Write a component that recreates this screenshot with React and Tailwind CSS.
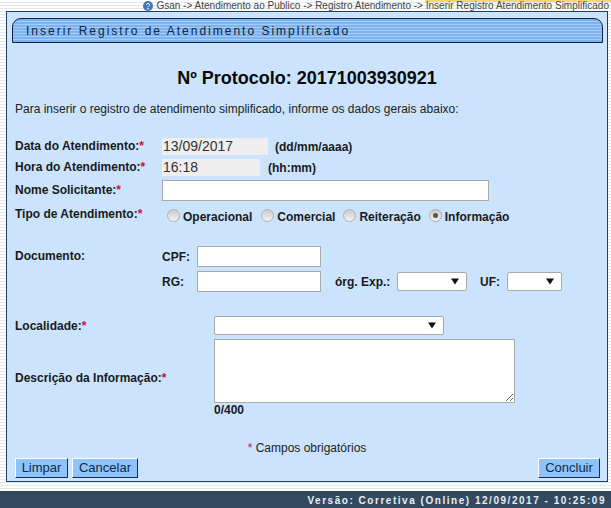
const font = { fontFamily: '"Liberation Sans", Arial, sans-serif' };

function Label({ children, req, className = "" }) {
  return (
    <span className={`font-bold text-[12px] leading-[14px] text-[#1a1a1a] ${className}`}>
      {children}
      {req && <span className="text-[#d01030]">*</span>}
    </span>
  );
}

function Input({ className = "" }) {
  return <input className={`block bg-white border border-[#a9a9a9] outline-none ${className}`} />;
}

function ReadOnly({ value, className = "" }) {
  return (
    <div className={`bg-[#eeeeee] text-[14px] leading-[17px] text-[#333] px-[1px] ${className}`}>{value}</div>
  );
}

function Select({ className = "" }) {
  return (
    <div className={`relative ${className}`}>
      <select className="block w-full h-full appearance-none bg-white border border-[#a9a9a9] rounded-[2px] outline-none" />
      <svg className="absolute right-[8px] top-[6px] pointer-events-none" width="8" height="7" viewBox="0 0 8 7">
        <path d="M0 0.5h8L4 6.5z" fill="#111" />
      </svg>
    </div>
  );
}

function Radio({ label, checked, className = "" }) {
  return (
    <label className={`flex items-center ${className}`}>
      <span className="relative w-[13px] h-[13px] rounded-full border border-[#b0b0b0] bg-gradient-to-b from-[#cccccc] to-[#f2f2f2] flex items-center justify-center -translate-y-[2px]">
        {checked && <span className="w-[5px] h-[5px] rounded-full bg-[#555]" />}
      </span>
      <span className="ml-[3px] font-bold text-[12px] leading-[14px] text-[#1a1a1a]">{label}</span>
    </label>
  );
}

function Btn({ children, className = "" }) {
  return (
    <button className={`h-[20px] bg-[#8fc3fb] text-[13px] leading-[16px] text-[#0d2a48] border border-t-white border-l-white border-r-[#10305a] border-b-[#10305a] ${className}`}>
      {children}
    </button>
  );
}

const stripes =
  "bg-[repeating-linear-gradient(180deg,#ffffff_0px,#ffffff_2px,#dfe9f1_2px,#dfe9f1_3px)]";

export default function App() {
  return (
    <div style={font} className={`w-[611px] h-[508px] overflow-hidden flex flex-col ${stripes}`}>
      <div className="relative h-[11px] flex justify-end items-center">
        <div className="absolute right-0 top-0 w-[186px] h-[2px] bg-[#f5d96b]" />
        <svg className="absolute left-[143px] top-[1px]" width="10" height="10" viewBox="0 0 10 10">
          <circle cx="5" cy="5" r="5" fill="#3f78b8" />
          <circle cx="5" cy="7.8" r="0.8" fill="#fff" />
          <path d="M3.4 3.8C3.5 2 6.7 2 6.7 3.8c0 1.2-1.7 1.2-1.7 2.5" stroke="#fff" strokeWidth="1" fill="none" />
        </svg>
        <span className="relative text-[10px] tracking-[0.01px] leading-[11px] text-[#444] whitespace-nowrap mr-[2px]">
          Gsan -&gt; Atendimento ao Publico -&gt; Registro Atendimento -&gt; Inserir Registro Atendimento Simplificado
        </span>
      </div>

      <div className="ml-[6px] w-[602px] h-[471px] border border-[#21405f] bg-[#cbe3fd] px-[5px] pt-[6px] flex flex-col">
        <div className="h-[25px] w-[591px] border border-[#0d2440] rounded-tl-[9px] rounded-tr-[9px] bg-[repeating-linear-gradient(180deg,#7db4f0_0px,#7db4f0_2px,#a5ccf6_2px,#a5ccf6_3px)] pl-[13px] flex items-center">
          <span className="text-[12px] tracking-[2px] text-[#10243c] whitespace-nowrap">
            Inserir Registro de Atendimento Simplificado
          </span>
        </div>

        <div className="mt-[25px] text-center text-[18px] leading-[20px] font-bold text-[#0a0a0a]">
          Nº Protocolo: 20171003930921
        </div>
        <p className="mt-[14px] ml-[3px] text-[12px] leading-[14px] text-[#222]">
          Para inserir o registro de atendimento simplificado, informe os dados gerais abaixo:
        </p>

        <div className="mt-[22px] ml-[3px] flex flex-col">
          <div className="flex items-center h-[17px]">
            <Label req className="w-[147px] -translate-y-[1px]">Data do Atendimento:</Label>
            <ReadOnly value="13/09/2017" className="w-[106px]" />
            <span className="ml-[7px] font-bold text-[12px] text-[#1a1a1a]">(dd/mm/aaaa)</span>
          </div>
          <div className="flex items-center h-[17px] mt-[4px]">
            <Label req className="w-[147px] -translate-y-[1px]">Hora do Atendimento:</Label>
            <ReadOnly value="16:18" className="w-[98px]" />
            <span className="ml-[8px] font-bold text-[12px] text-[#1a1a1a]">(hh:mm)</span>
          </div>
          <div className="flex items-center h-[21px] mt-[4px]">
            <Label req className="w-[147px] -translate-y-[1px]">Nome Solicitante:</Label>
            <Input className="w-[327px] h-[21px]" />
          </div>
          <div className="flex items-center h-[14px] mt-[6px]">
            <Label req className="w-[152px]">Tipo de Atendimento:</Label>
            <div className="flex translate-y-[3px]">
              <Radio label="Operacional" />
              <Radio label="Comercial" className="ml-[9px]" />
              <Radio label="Reiteração" className="ml-[8px]" />
              <Radio label="Informação" checked className="ml-[8px]" />
            </div>
          </div>

          <div className="flex mt-[25px]">
            <Label className="w-[147px] mt-[3px]">Documento:</Label>
            <div className="flex flex-col">
              <div className="flex items-center h-[21px]">
                <Label className="w-[35px]">CPF:</Label>
                <Input className="w-[124px] h-[21px]" />
              </div>
              <div className="flex items-center h-[21px] mt-[4px]">
                <Label className="w-[35px]">RG:</Label>
                <Input className="w-[124px] h-[21px]" />
                <Label className="ml-[14px] w-[62px]">órg. Exp.:</Label>
                <Select className="w-[70px] h-[19px]" />
                <Label className="ml-[13px] w-[27px]">UF:</Label>
                <Select className="w-[55px] h-[19px]" />
              </div>
            </div>
          </div>

          <div className="flex items-center h-[19px] mt-[24px]">
            <Label req className="w-[199px]">Localidade:</Label>
            <Select className="w-[230px] h-[19px]" />
          </div>
          <div className="flex items-center mt-[4px]">
            <Label req className="w-[199px] translate-y-[7px]">Descrição da Informação:</Label>
            <textarea className="block w-[301px] h-[64px] bg-white border border-[#a9a9a9] outline-none" />
          </div>
          <div className="ml-[199px] font-bold text-[12px] leading-[14px] text-[#1a1a1a]">0/400</div>
          <div className="mt-[24px] text-center text-[12px] leading-[14px] text-[#222] mr-[3px]">
            <span className="text-[#d01030]">* </span>Campos obrigatórios
          </div>
        </div>

        <div className="mt-[3px] ml-[3px] mr-[2px] flex">
          <Btn className="w-[53px]">Limpar</Btn>
          <Btn className="w-[66px] ml-[4px]">Cancelar</Btn>
          <Btn className="w-[62px] ml-auto">Concluir</Btn>
        </div>
      </div>

      <div className="mt-[9px] flex-1 bg-[#33495f] flex justify-end items-start">
        <span className="mt-[3px] mr-[5px] text-[10px] leading-[13px] font-bold tracking-[1.53px] text-[#e8eef4] whitespace-nowrap">
          Versão: Corretiva (Online) 12/09/2017 - 10:25:09
        </span>
      </div>
    </div>
  );
}
